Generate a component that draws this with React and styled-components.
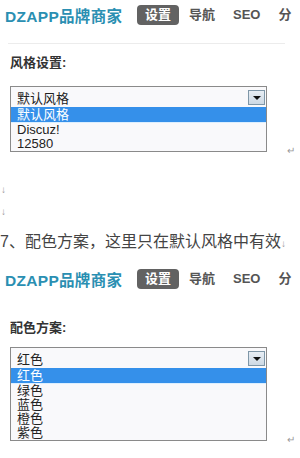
import React from "react";
import styled, { createGlobalStyle } from "styled-components";

const GlobalStyle = createGlobalStyle`
    body {
        margin: 0;
        background: #fff;
        font-family: "Liberation Sans", "Noto Sans CJK SC", sans-serif;
        color: #333;
    }
`;

const Page = styled.div`
    width: 300px;
    height: 458px;
    overflow: hidden;
`;

const Header = styled.div`
    display: flex;
    align-items: center;
    height: 20px;
    padding-left: 5px;
    margin-top: ${p => p.$top}px;
    white-space: nowrap;
`;

const Logo = styled.div`
    width: 132px;
    flex-shrink: 0;
    font-size: 15.5px;
    font-weight: bold;
    color: #2a8fb2;
    letter-spacing: 0.3px;
`;

const Nav = styled.div`
    display: flex;
    gap: 2px;
`;

const NavItem = styled.div`
    height: 20px;
    line-height: 20px;
    padding: 0 8px;
    font-size: 13px;
    font-weight: bold;
    border-radius: 4px;
    color: ${p => (p.$active ? "#fff" : "#555")};
    background: ${p => (p.$active ? "#626262" : "transparent")};
`;

const Divider = styled.div`
    height: 1px;
    width: 277px;
    margin: 18px 0 0 8px;
    background: #ececec;
`;

const Label = styled.div`
    font-size: 13px;
    font-weight: bold;
    line-height: 16px;
    color: #333;
    margin: ${p => p.$top}px 0 0 10px;
`;

const SelectRow = styled.div`
    display: flex;
    align-items: flex-end;
    margin: ${p => p.$top}px 0 0 10px;
`;

const Select = styled.div`
    width: 255px;
    border: 1px solid #8a8a8a;
    background: #f9f9fb;
`;

const Current = styled.div`
    display: flex;
    align-items: center;
    justify-content: space-between;
    height: 20px;
    padding: 0 1px 0 6px;
    font-size: 13px;
    color: #222;
`;

const Arrow = styled.div`
    width: 15px;
    height: 13px;
    border: 1px solid #7f97a8;
    background: linear-gradient(#e8eef4, #cdd9e4);
    display: flex;
    align-items: center;
    justify-content: center;
    &::after {
        content: "";
        border-left: 4px solid transparent;
        border-right: 4px solid transparent;
        border-top: 4px solid #111;
        margin-top: 1px;
    }
`;

const Option = styled.div`
    height: ${p => (p.$selected ? 15 : 14)}px;
    line-height: ${p => (p.$selected ? 15 : 14)}px;
    padding-left: 6px;
    font-size: 13px;
    color: ${p => (p.$selected ? "#fff" : "#222")};
    background: ${p => (p.$selected ? "#3590ea" : "transparent")};
    border-bottom: ${p => (p.$selected ? "1px solid #dcefff" : "none")};
`;

const Return = styled.span`
    font-size: 10px;
    color: #999;
    margin-left: 20px;
    margin-bottom: -4px;
    line-height: 10px;
`;

const Mark = styled.div`
    font-size: 10px;
    color: #999;
    line-height: 22px;
    padding-left: 1px;
`;

const Marks = styled.div`
    margin-top: 27px;
`;

const Para = styled.div`
    font-size: 16px;
    line-height: 22px;
    color: #444;
    white-space: nowrap;
    margin-top: 8px;
    span {
        font-size: 10px;
        color: #999;
    }
`;

function TopBar({ top }) {
    return (
        <Header $top={top}>
            <Logo>DZAPP品牌商家</Logo>
            <Nav>
                <NavItem $active>设置</NavItem>
                <NavItem>导航</NavItem>
                <NavItem>SEO</NavItem>
                <NavItem>分</NavItem>
            </Nav>
        </Header>
    );
}

function FakeSelect({ top, value, options }) {
    return (
        <SelectRow $top={top}>
            <Select>
                <Current>
                    <span>{value}</span>
                    <Arrow />
                </Current>
                {options.map((o, i) => (
                    <Option key={o} $selected={i === 0}>{o}</Option>
                ))}
            </Select>
            <Return>↵</Return>
        </SelectRow>
    );
}

export default function App() {
    return (
        <Page>
            <GlobalStyle />
            <TopBar top={5} />
            <Divider />
            <Label $top={11}>风格设置:</Label>
            <FakeSelect top={15} value="默认风格" options={["默认风格", "Discuz!", "12580"]} />
            <Marks>
                <Mark>↓</Mark>
                <Mark>↓</Mark>
            </Marks>
            <Para>7、配色方案，这里只在默认风格中有效<span>↓</span></Para>
            <TopBar top={14} />
            <Label $top={31}>配色方案:</Label>
            <FakeSelect top={11} value="红色" options={["红色", "绿色", "蓝色", "橙色", "紫色"]} />
        </Page>
    );
}
